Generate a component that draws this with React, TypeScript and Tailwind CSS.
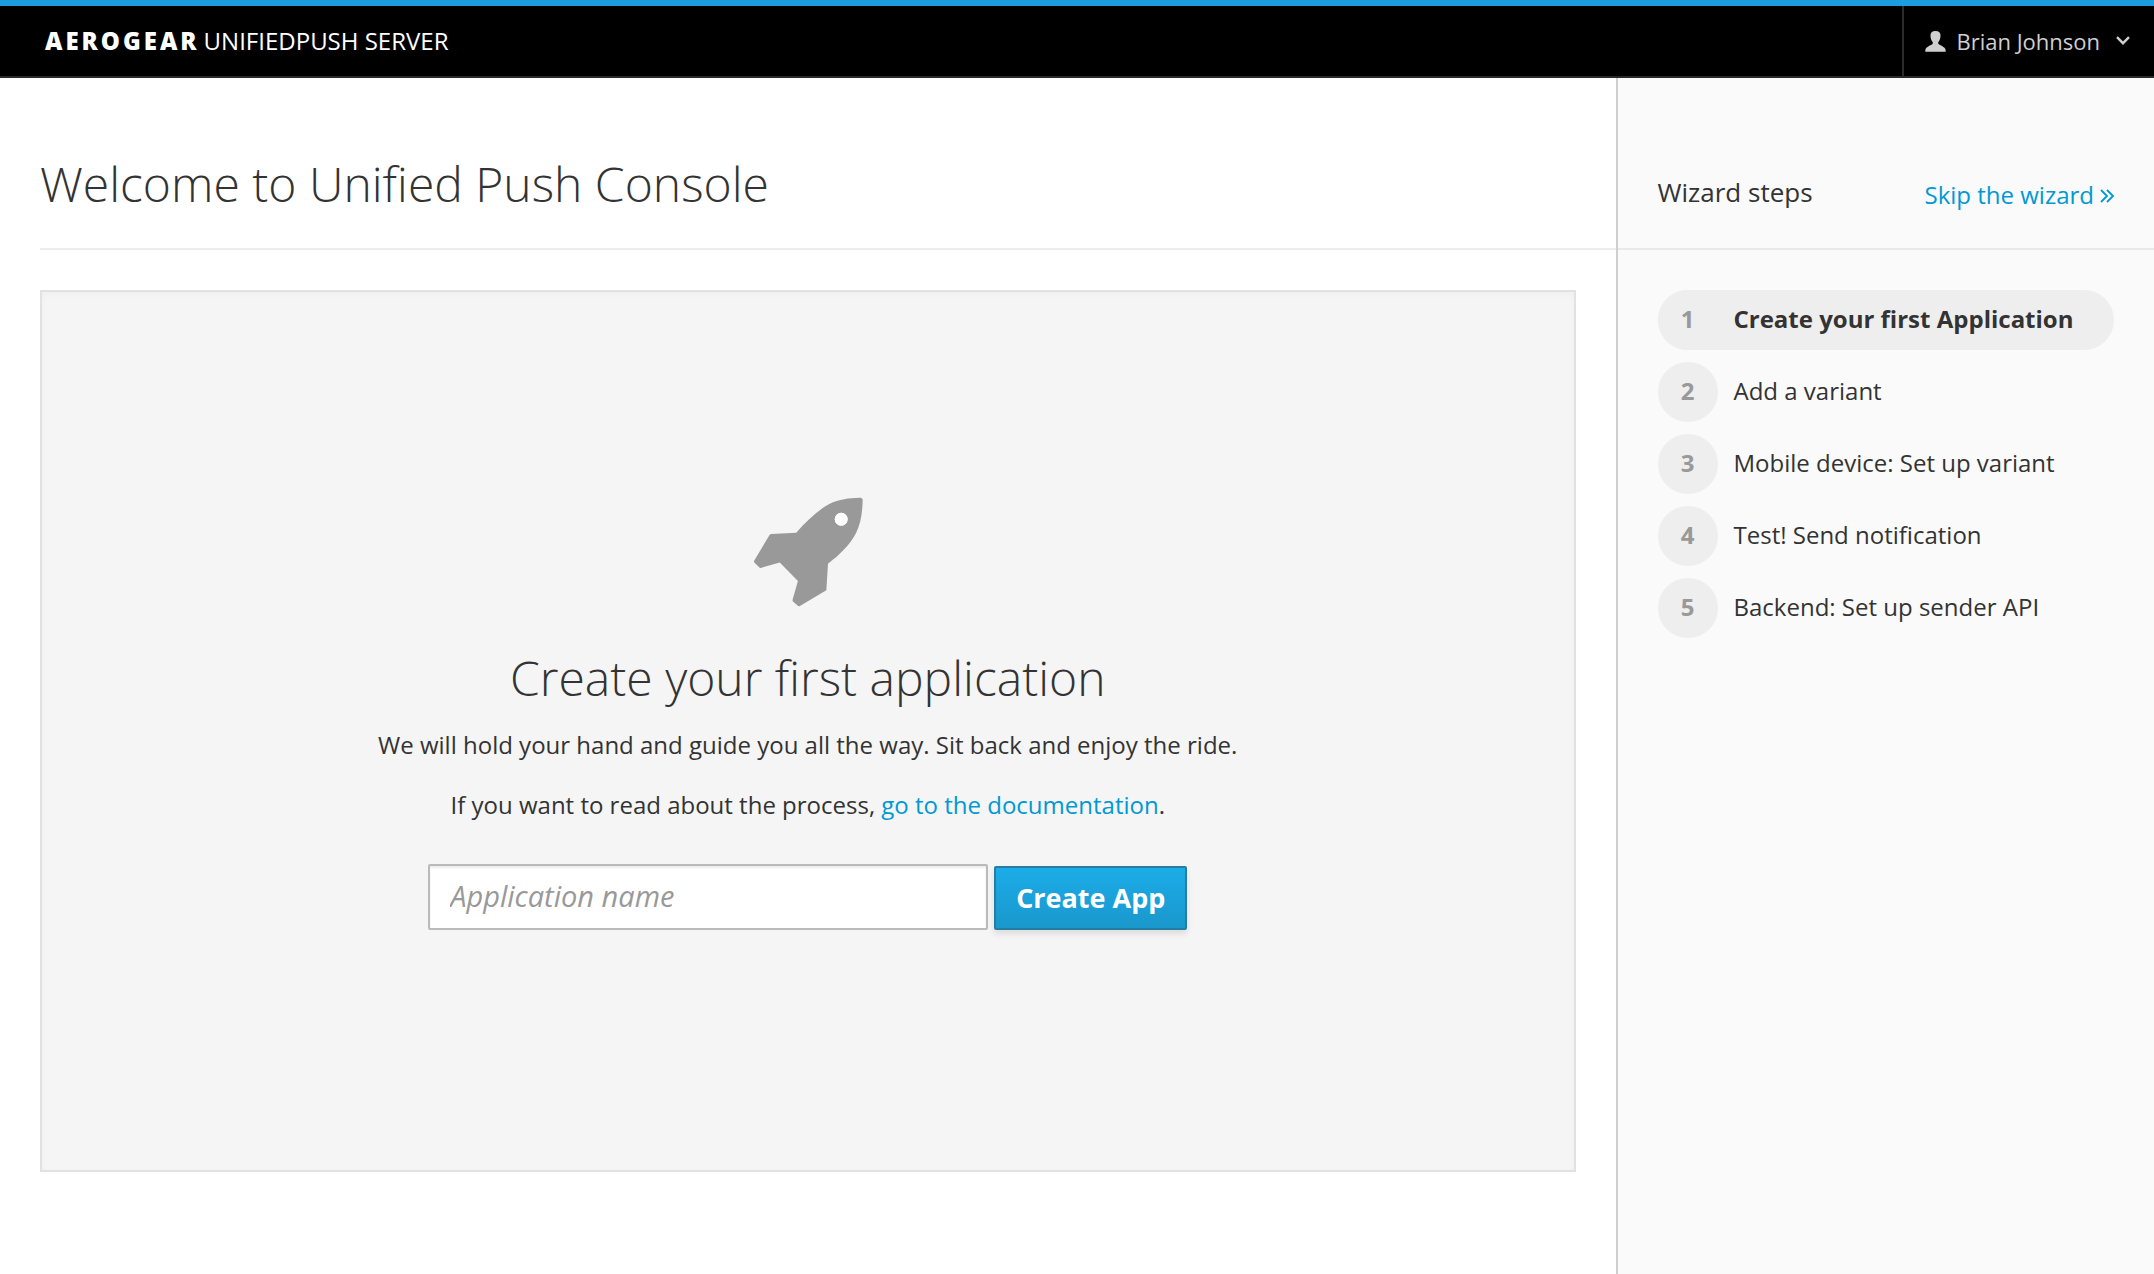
const steps = [
  'Create your first Application',
  'Add a variant',
  'Mobile device: Set up variant',
  'Test! Send notification',
  'Backend: Set up sender API',
];

function UserIcon() {
  return (
    <svg viewBox="0 0 21 21" className="w-[21px] h-[21px] fill-current" aria-hidden="true">
      <path d="M10.500 0C7 0 5.300 1.600 5.500 4.800C5.500 7.500 6.500 9.800 7.800 11.200V12.600C7.500 14.200 0.300 15.500 0.300 19.500V20.800H20.700V19.500C20.700 15.500 13.500 14.200 13.200 12.600V11.200C14.500 9.800 15.500 7.500 15.500 4.800C15.700 1.600 14 0 10.500 0Z" />
    </svg>
  );
}

function RocketIcon() {
  return (
    <svg viewBox="69 50 333 333" className="size-[110px] fill-[#999999]" aria-hidden="true">
      <path
        fillRule="evenodd"
        d="M392 52Q401 51 401 60C400 100 395 130 381 159C362 196 331 225 296 252L291 332L211 380Q207 382 203 378L190 366Q188 364 189 360L205 304L150 248L95 264Q90 266 87 262L73 248Q71 245 73 242L119 165Q121 162 125 162L200 158C230 124 262 92 300 71C330 56 360 53 392 52ZM336 98A19.500 19.500 0 1 0 336 137A19.500 19.500 0 1 0 336 98Z"
      />
      <circle cx="336" cy="117.500" r="19.500" className="fill-white" />
    </svg>
  );
}

export default function App() {
  return (
    <div className="min-h-screen flex flex-col bg-white text-[#333333] text-[24px] leading-10 font-['Open_Sans',sans-serif]">
      <header className="flex items-stretch justify-between h-[78px] bg-black border-t-[6px] border-t-[#1b9ddf] border-b-2 border-b-[#292929]">
        <a href="#" className="flex items-center pl-[45px] text-white">
          <span className="font-extrabold tracking-[3px]">AEROGEAR</span>
          <span className="ml-1">UNIFIEDPUSH SERVER</span>
        </a>
        <button type="button" className="flex items-center border-l-2 border-[#2b2b2b] pl-[21px] pr-6 text-[#cfcfcf]">
          <UserIcon />
          <span className="ml-2.5 text-[22px] leading-10">Brian Johnson</span>
          <svg viewBox="0 0 14 9" className="w-[14px] h-[9px] ml-4 mb-0.5" fill="none" stroke="currentColor" strokeWidth="2.400" aria-hidden="true">
            <path d="M1 1.200L7 7.200L13 1.200" />
          </svg>
        </button>
      </header>

      <div className="grow grid grid-cols-[3fr_1fr]">
        <main>
          <div className="ml-10 h-[172px] pt-[42px] flex items-center border-b-2 border-[#ededed]">
            <h1 className="text-[48px] leading-[60px] font-light">Welcome to Unified Push Console</h1>
          </div>
          <section className="m-10 pt-[205px] pb-[240px] flex flex-col items-center text-center bg-[#f5f5f5] border-2 border-[#e2e2e2] shadow-[inset_0_2px_6px_rgba(0,0,0,0.03)]">
            <RocketIcon />
            <h2 className="mt-[42px] text-[48px] leading-[58px] font-light">Create your first application</h2>
            <p className="mt-[18px]">We will hold your hand and guide you all the way. Sit back and enjoy the ride.</p>
            <p className="mt-5">
              If you want to read about the process,{' '}
              <a href="#" className="text-[#0099d3]">go to the documentation</a>.
            </p>
            <form className="mt-[39px] flex items-end gap-1.5" onSubmit={(e) => e.preventDefault()}>
              <input
                type="text"
                aria-label="Application name"
                placeholder="Application name"
                className="w-[560px] h-[66px] px-5 pb-1 text-[29px] bg-white border-2 border-[#bababa] rounded-[2px] shadow-[inset_0_2px_2px_rgba(0,0,0,0.075)] placeholder:italic placeholder:text-[#999999]"
              />
              <button
                type="submit"
                className="h-16 px-5 text-[27px] font-bold text-white border-2 border-[#267da1] rounded-[2px] bg-linear-to-b from-[#1cace8] to-[#1998cc] shadow-[0_4px_6px_rgba(0,0,0,0.1)]"
              >
                Create App
              </button>
            </form>
          </section>
        </main>

        <aside className="bg-[#fafafa] border-l-2 border-[#cecfcf]">
          <div className="h-[172px] pt-[58px] px-10 flex items-center justify-between border-b-2 border-[#e9e9e9]">
            <h2 className="text-[26px]">Wizard steps</h2>
            <a href="#" className="flex items-center gap-1.5 pt-1.5 text-[#0099d3]">
              Skip the wizard
              <svg viewBox="0 0 14 14" className="size-[14px] mt-0.5" fill="none" stroke="currentColor" strokeWidth="1.800" aria-hidden="true">
                <path d="M1 1L7 7L1 13M7 1L13 7L7 13" />
              </svg>
            </a>
          </div>
          <ol className="p-10 flex flex-col gap-3">
            {steps.map((step, i) => (
              <li
                key={step}
                aria-current={i === 0 ? 'step' : undefined}
                className={i === 0 ? 'flex gap-4 rounded-full bg-[#eeeeee] font-bold' : 'flex gap-4'}
              >
                <span className="size-[60px] pb-0.5 shrink-0 flex items-center justify-center rounded-full bg-[#eeeeee] font-bold text-[#999999]">
                  {i + 1}
                </span>
                <span className="pb-0.5 self-center">{step}</span>
              </li>
            ))}
          </ol>
        </aside>
      </div>
    </div>
  );
}
